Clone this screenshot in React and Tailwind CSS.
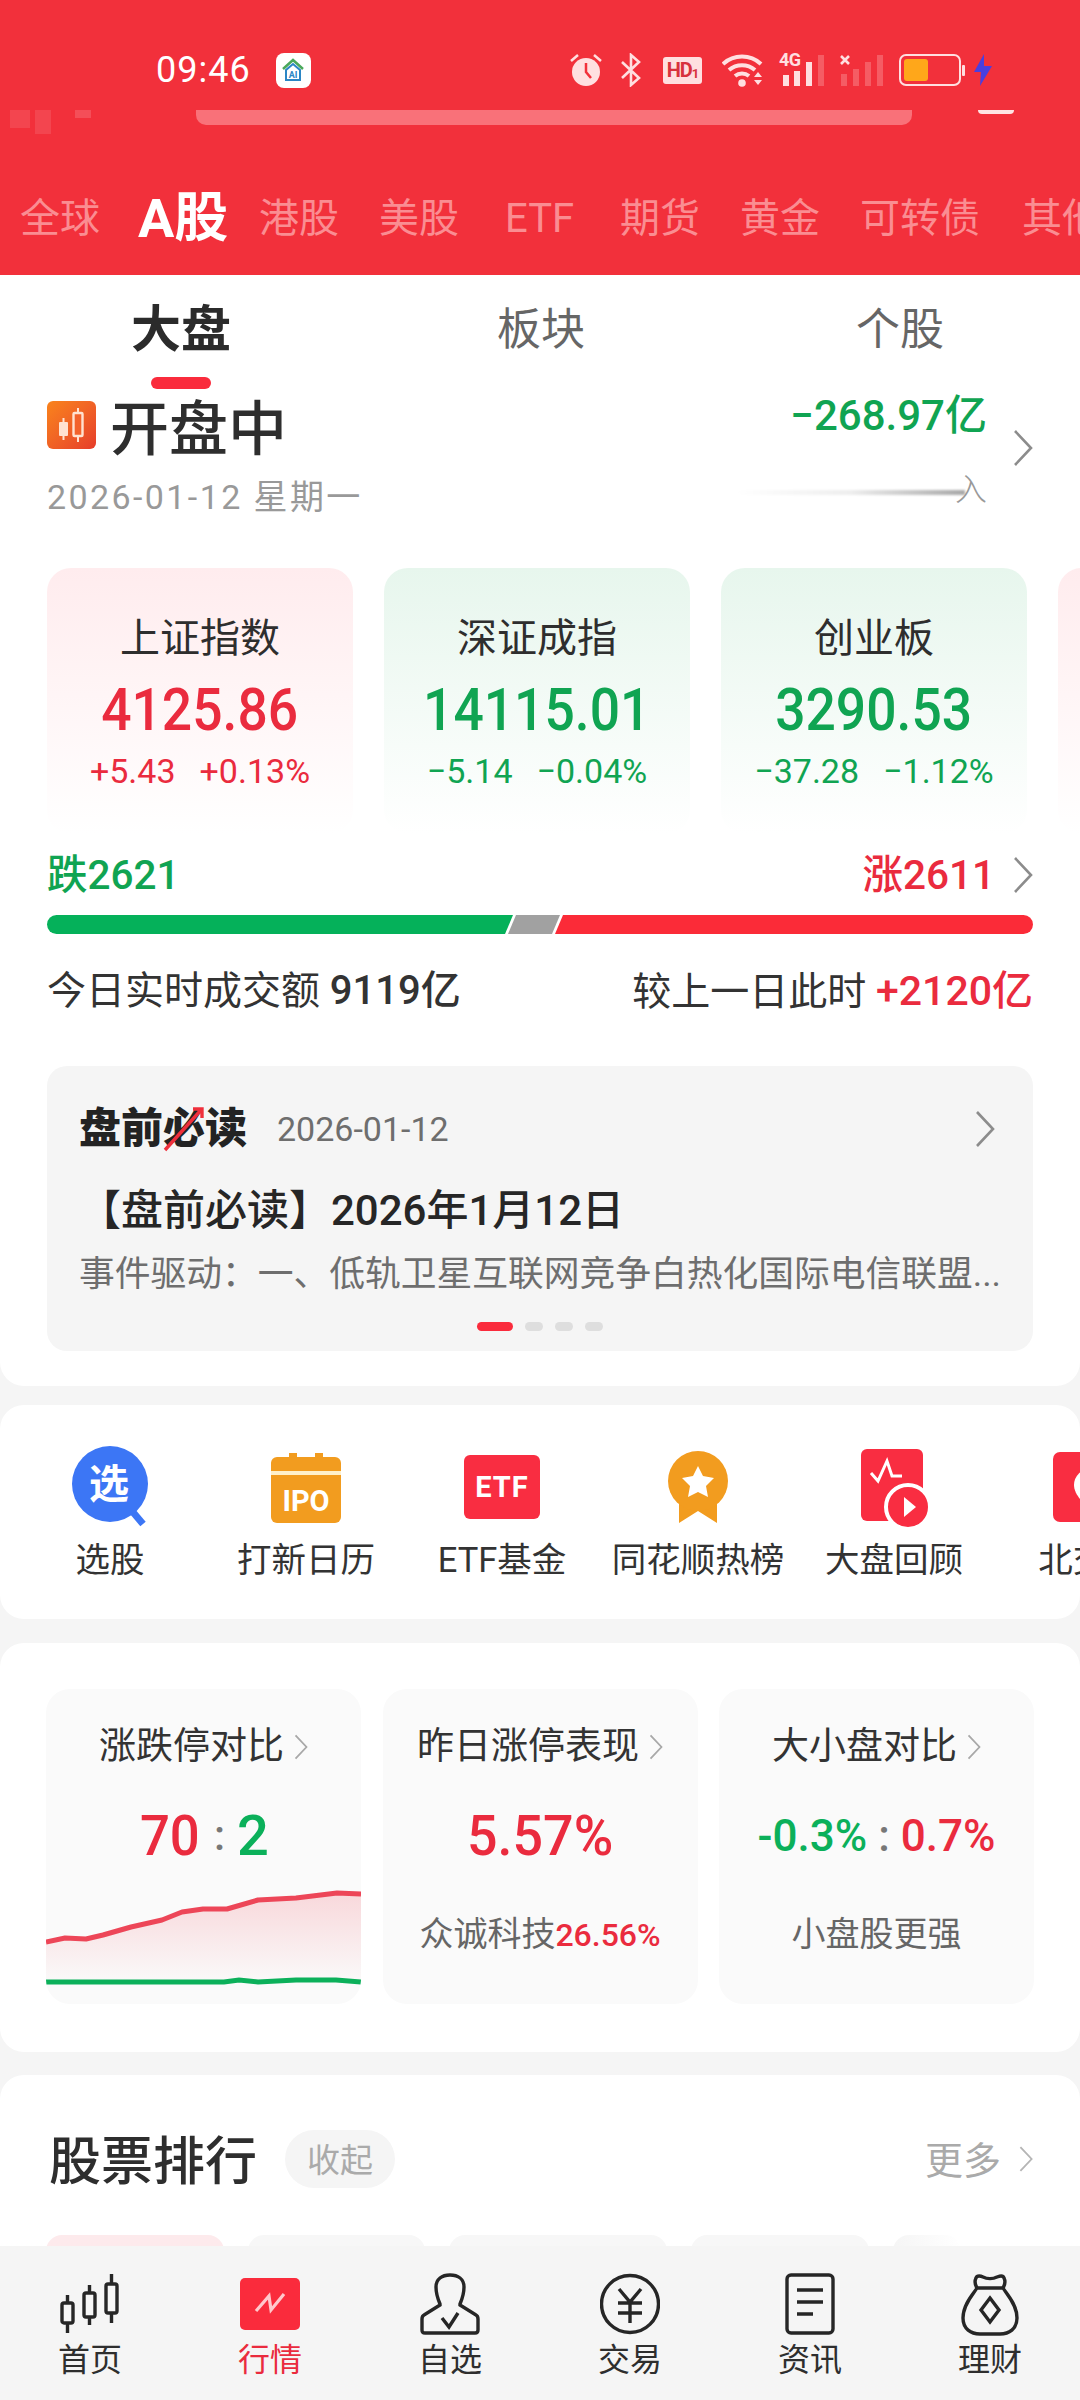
const RED = "text-[#ea2b3e]";
const GREEN = "text-[#10a452]";

function Chevron({ className = "", w = 20, h = 38, color = "#8c8c8c" }) {
  return (
    <svg width={w} height={h} viewBox="0 0 20 38" className={className}>
      <polyline points="2,2 18,19 2,36" fill="none" stroke={color} strokeWidth="2.6" />
    </svg>
  );
}

function StatusIcons() {
  const c = "#ffdfe0";
  return (
    <div className="flex items-center ml-auto mr-[87px] h-[40px]">
      {/* alarm */}
      <svg width="32" height="34" viewBox="0 0 32 34">
        <circle cx="16" cy="19" r="14" fill={c} />
        <path d="M16 10v9l5 6" fill="none" stroke="#f2303b" strokeWidth="2.5" />
        <path d="M1 8l7-6M31 8l-7-6" stroke={c} strokeWidth="2.5" />
      </svg>
      {/* bluetooth */}
      <svg width="22" height="34" viewBox="0 0 22 34" className="ml-[18px]">
        <path d="M2 9l17 16-8 7V2l8 7L2 25" fill="none" stroke={c} strokeWidth="2.6" />
      </svg>
      {/* HD */}
      <div className="ml-[21px] w-[39px] h-[27px] rounded-[3px] bg-[#ffdfe0] flex items-center justify-center text-[#d8323d] text-[20px] leading-none font-bold tracking-[-1px]">
        HD<span className="text-[13px] mt-[6px]">1</span>
      </div>
      {/* wifi */}
      <svg width="44" height="34" viewBox="0 0 44 34" className="ml-[20px]">
        <path d="M1 11a28 28 0 0 1 38 0M7 17a20 20 0 0 1 26 0M13 23a11 11 0 0 1 14 0" fill="none" stroke={c} strokeWidth="4" />
        <circle cx="20" cy="30" r="3.8" fill={c} />
        <path d="M32 24l4-5 4 5zM32 27l4 5 4-5z" fill={c} />
      </svg>
      {/* 4G */}
      <div className="relative ml-[13px] w-[46px] h-[34px]">
        <span className="absolute left-0 top-[-3px] text-[#ffdfe0] text-[18px] leading-[20px] font-bold tracking-[-0.5px]">4G</span>
        <svg width="46" height="34" viewBox="0 0 46 34" className="absolute inset-0">
          <rect x="4" y="22" width="6" height="11" fill={c} />
          <rect x="15" y="18" width="6" height="15" fill={c} />
          <rect x="27" y="9" width="6" height="24" fill={c} />
          <rect x="39" y="2" width="6" height="31" fill={c} opacity="0.25" />
        </svg>
      </div>
      {/* sim2 */}
      <svg width="44" height="34" viewBox="0 0 44 34" className="ml-[15px]">
        <path d="M1 3l8 8M9 3l-8 8" stroke={c} strokeWidth="2.6" />
        <rect x="1" y="21" width="6" height="12" fill={c} opacity="0.25" />
        <rect x="13" y="16" width="6" height="17" fill={c} opacity="0.25" />
        <rect x="25" y="9" width="6" height="24" fill={c} opacity="0.25" />
        <rect x="37" y="2" width="6" height="31" fill={c} opacity="0.25" />
      </svg>
      {/* battery */}
      <svg width="67" height="32" viewBox="0 0 67 32" className="ml-[15px]">
        <rect x="1" y="1" width="60" height="30" rx="6" fill="none" stroke={c} strokeWidth="2" />
        <rect x="5" y="5" width="24" height="22" rx="3" fill="#ffa71a" />
        <rect x="63" y="11" width="3" height="11" rx="1" fill={c} />
      </svg>
      {/* bolt */}
      <svg width="20" height="32" viewBox="0 0 20 32" className="ml-[7px]">
        <path d="M11 0L1 18h7l-1 14 12-20h-8z" fill="#4a3fe0" />
      </svg>
    </div>
  );
}

const marketTabs = [
  ["全球", "w-[81px] mr-[37px]"],
  ["A股", "w-[87px] mr-[34px] !text-white text-[54px] font-bold"],
  ["港股", "w-[82px] mr-[38px]"],
  ["美股", "w-[82px] mr-[44px]"],
  ["ETF", "w-[70px] mr-[45px]"],
  ["期货", "w-[81px] mr-[39px]"],
  ["黄金", "w-[82px] mr-[38px]"],
  ["可转债", "w-[122px] mr-[40px]"],
  ["其他", "w-[82px]"],
];

function Header() {
  return (
    <div className="h-[275px] bg-[#f2303b] shrink-0 overflow-hidden">
      <div className="h-[110px] pt-[30px] flex items-center">
        <span className="ml-[156px] text-white text-[36px] leading-[80px] tracking-[1px]">09:46</span>
        <div className="ml-[25px] w-[35px] h-[35px] rounded-[8px] bg-white flex items-center justify-center">
          <svg width="26" height="26" viewBox="0 0 26 26">
            <path d="M3 12L13 3l10 9" fill="none" stroke="#4aa85a" strokeWidth="2.5" />
            <path d="M6 13v10h14V13L13 7z" fill="none" stroke="#2b86c5" strokeWidth="2" />
            <text x="13" y="21" fontSize="9" fontWeight="700" fill="#2b86c5" textAnchor="middle">AI</text>
          </svg>
        </div>
        <StatusIcons />
      </div>
      <div className="relative h-[15px] flex">
        <svg width="100" height="32" viewBox="0 0 100 32" className="absolute left-[10px] top-0">
          <rect x="0" y="0" width="20" height="18" fill="#fff" opacity="0.1" />
          <rect x="25" y="0" width="16" height="24" fill="#fff" opacity="0.1" />
          <rect x="65" y="0" width="16" height="8" fill="#fff" opacity="0.15" />
        </svg>
        <div className="ml-[196px] w-[716px] h-[15px] rounded-b-[10px] bg-[#f97179]"></div>
        <div className="ml-[66px] w-[36px] h-[4px] rounded-b-full bg-[#ffe3e3]"></div>
      </div>
      <div className="flex items-center h-[102px] pl-[20px] mt-[43px] text-[40px] leading-[60px] text-[#fa8d92] whitespace-nowrap">
        {marketTabs.map(([t, c]) => (
          <span key={t} className={"shrink-0 " + c}>{t}</span>
        ))}
      </div>
    </div>
  );
}

function IndexCard({ name, value, a, b, up }) {
  return (
    <div
      className={
        "w-[306px] h-[266px] shrink-0 rounded-[24px] flex flex-col items-center bg-gradient-to-b to-white " +
        (up ? "from-[#ffecee]" : "from-[#e7f6ed]")
      }
    >
      <div className="mt-[45px] h-[52px] text-[40px] leading-[52px] text-[#2e2e2e]">{name}</div>
      <div className={"mt-[17px] h-[56px] text-[60px] leading-[56px] font-medium inline-block scale-x-[0.89] whitespace-nowrap " + (up ? RED : GREEN)}>{value}</div>
      <div className={"mt-[13px] h-[40px] flex gap-[24px] text-[34px] leading-[40px] whitespace-nowrap " + (up ? RED : GREEN)}>
        <span>{a}</span>
        <span>{b}</span>
      </div>
    </div>
  );
}

function Market() {
  return (
    <div className="bg-white rounded-b-[24px] shrink-0">
      <div className="flex h-[114px]">
        <div className="w-[362px] relative flex flex-col items-center">
          <span className="h-[104px] text-[50px] leading-[110px] font-bold text-[#2b2b2b]">大盘</span>
          <span className="w-[60px] h-[12px] rounded-full bg-[#fa2b3c] -mt-[2px]"></span>
        </div>
        <div className="w-[358px] text-center text-[44px] leading-[110px] text-[#666]">板块</div>
        <div className="w-[360px] text-center text-[44px] leading-[110px] text-[#666]">个股</div>
      </div>
      <div className="flex justify-between pl-[47px] pr-[47px] h-[179px]">
        <div>
          <div className="flex items-center h-[82px]">
            <div className="w-[49px] h-[48px] -mt-[10px] rounded-[6px] bg-gradient-to-br from-[#f9831b] to-[#e63b2a] flex items-center justify-center">
              <svg width="30" height="36" viewBox="0 0 30 36">
                <rect x="2" y="15" width="9" height="14" rx="1" fill="#ffe2d0" />
                <path d="M6.5 11v22M21 1v34" stroke="#ffe2d0" strokeWidth="2" />
                <rect x="16.5" y="6" width="9" height="23" rx="1" fill="#f3622b" stroke="#ffe2d0" strokeWidth="2.4" />
              </svg>
            </div>
            <span className="ml-[14px] text-[59px] leading-[82px] font-medium text-[#2e2e2e]">开盘中</span>
          </div>
          <div className="h-[52px] text-[34px] leading-[52px] text-[#999] tracking-[2.4px]">2026-01-12 星期一</div>
        </div>
        <div className="flex">
          <div className="flex flex-col items-end">
            <div className={"h-[52px] text-[42px] leading-[54px] font-medium whitespace-nowrap " + GREEN}>−268.97亿</div>
            <div className="relative w-[250px] h-[60px] mt-[24px]">
              <div className="absolute right-[22px] top-[25px] w-[228px] h-[5px] blur-[1px] bg-gradient-to-r from-white via-[#eeeeee] to-[#a8a8a8]"></div>
              <span className="absolute right-0 top-0 text-[32px] leading-[50px] text-[#999] font-light">入</span>
            </div>
          </div>
          <Chevron className="ml-[26px] mt-[40px]" />
        </div>
      </div>
      <div className="flex gap-[31px] pl-[47px] overflow-hidden">
        <IndexCard name="上证指数" value="4125.86" a="+5.43" b="+0.13%" up />
        <IndexCard name="深证成指" value="14115.01" a="−5.14" b="−0.04%" />
        <IndexCard name="创业板" value="3290.53" a="−37.28" b="−1.12%" />
        <div className="w-[306px] h-[266px] shrink-0 rounded-[24px] bg-gradient-to-b from-[#ffecee] to-white"></div>
      </div>
      <div className="mt-[17px] mx-[47px] h-[48px] flex items-center text-[40.5px] leading-[48px] font-medium">
        <span className={GREEN}>跌2621</span>
        <span className={"ml-auto " + RED}>涨2611</span>
        <Chevron className="ml-[18px]" />
      </div>
      <div className="mt-[16px] mx-[47px] h-[19px] flex rounded-full overflow-hidden">
        <div className="w-[466px] bg-[#05b15a] [clip-path:polygon(0_0,466px_0,458px_19px,0_19px)]"></div>
        <div className="w-[52px] -ml-[5px] bg-[#a1a1a1] [clip-path:polygon(8px_0,52px_0,44px_19px,0_19px)]"></div>
        <div className="w-[478px] -ml-[5px] bg-[#fb2b38] [clip-path:polygon(8px_0,478px_0,478px_19px,0_19px)]"></div>
      </div>
      <div className="mt-[33px] mx-[47px] h-[48px] flex items-center justify-between text-[39px] leading-[52px] text-[#333]">
        <div>今日实时成交额 <span className="font-medium text-[40px]">9119亿</span></div>
        <div>较上一日此时 <span className={"font-medium text-[41px] " + RED}>+2120亿</span></div>
      </div>
      <div className="mt-[51px] mx-[47px] h-[285px] rounded-[20px] bg-[#f5f5f5] pl-[32px] pr-[33px] flex flex-col">
        <div className="mt-[36px] h-[54px] flex items-center">
          <div className="relative w-[171px] h-[54px]">
            <span className="text-[42px] leading-[54px] font-black text-[#232323] whitespace-nowrap">盘前必读</span>
            <svg width="44" height="50" viewBox="0 0 44 50" className="absolute left-[84px] top-[2px]">
              <path d="M2 46L38 6M30 5h9v9" fill="none" stroke="#ef2f3b" strokeWidth="3.4" />
            </svg>
          </div>
          <span className="ml-[27px] text-[34px] leading-[54px] text-[#6e6e6e]">2026-01-12</span>
          <Chevron className="ml-auto mr-[5px]" />
        </div>
        <div className="mt-[30px] h-[50px] text-[42px] leading-[50px] font-medium text-[#262626] whitespace-nowrap">【盘前必读】2026年1月12日</div>
        <div className="mt-[14px] h-[48px] text-[35.75px] leading-[48px] text-[#6e6e6e] whitespace-nowrap">事件驱动：一、低轨卫星互联网竞争白热化国际电信联盟...</div>
        <div className="mt-[24px] flex items-center gap-[12px] ml-[398px]">
          <span className="w-[36px] h-[9px] rounded-full bg-[#fa2b3c]"></span>
          <span className="w-[18px] h-[9px] rounded-full bg-[#dedede]"></span>
          <span className="w-[18px] h-[9px] rounded-full bg-[#dedede]"></span>
          <span className="w-[18px] h-[9px] rounded-full bg-[#dedede]"></span>
        </div>
      </div>
      <div className="h-[35px]"></div>
    </div>
  );
}

function ToolIcon({ kind }) {
  if (kind === "xuan")
    return (
      <svg width="84" height="84" viewBox="0 0 84 84">
        <path d="M64 66l11 13" stroke="#3c76f5" strokeWidth="7" />
        <circle cx="42" cy="39" r="38" fill="#3c76f5" />
        <text x="41" y="53" fontSize="40" fontWeight="700" fill="#fff" textAnchor="middle">选</text>
      </svg>
    );
  if (kind === "ipo")
    return (
      <svg width="72" height="72" viewBox="0 0 72 72">
        <path d="M1 12a6 6 0 0 1 6-6h12V2h8v4h18V2h8v4h12a6 6 0 0 1 6 6v8H1z" fill="#f29c1f" />
        <path d="M1 24h70v42a6 6 0 0 1-6 6H7a6 6 0 0 1-6-6z" fill="#f29c1f" />
        <rect x="1" y="20" width="70" height="4" fill="#fff0c9" />
        <text x="36" y="60" fontSize="29" fontWeight="700" fill="#fff" textAnchor="middle">IPO</text>
      </svg>
    );
  if (kind === "etf")
    return (
      <svg width="78" height="66" viewBox="0 0 78 66">
        <rect x="1" y="1" width="76" height="64" rx="6" fill="#f92d41" />
        <text x="39" y="43" fontSize="29" fontWeight="700" fill="#fff" textAnchor="middle" letterSpacing="1">ETF</text>
      </svg>
    );
  if (kind === "medal")
    return (
      <svg width="62" height="74" viewBox="0 0 62 74">
        <path d="M12 40v33l19-12 19 12V40z" fill="#f29c1f" />
        <circle cx="31" cy="31" r="30" fill="#f29c1f" />
        <path d="M31 16l5 10 11 2-8 8 2 11-10-5-10 5 2-11-8-8 11-2z" fill="#fff" />
      </svg>
    );
  if (kind === "review")
    return (
      <svg width="68" height="80" viewBox="0 0 68 80">
        <rect x="1" y="2" width="62" height="72" rx="6" fill="#f92d41" />
        <path d="M11 26l7 8 9-20 5 15h10" fill="none" stroke="#fff" strokeWidth="3" />
        <circle cx="48" cy="60" r="22" fill="#f92d41" stroke="#fff" strokeWidth="4" />
        <path d="M44 50l12 10-12 10z" fill="#fff" />
      </svg>
    );
  return (
    <svg width="76" height="72" viewBox="0 0 76 72">
      <rect x="1" y="1" width="74" height="70" rx="7" fill="#f92d41" />
      <path d="M38 18a16 16 0 0 1 16 16c0 12-16 24-16 24S22 46 22 34a16 16 0 0 1 16-16z" fill="#fff" />
    </svg>
  );
}

const tools = [
  ["xuan", "选股"],
  ["ipo", "打新日历"],
  ["etf", "ETF基金"],
  ["medal", "同花顺热榜"],
  ["review", "大盘回顾"],
  ["bei", "北交所"],
];

function Tools() {
  return (
    <div className="mt-[19px] h-[214px] bg-white rounded-[24px] shrink-0 flex pl-[12px] overflow-hidden">
      {tools.map(([k, t]) => (
        <div key={k} className="w-[196px] shrink-0 flex flex-col items-center">
          <div className="h-[84px] mt-[40px] flex items-center justify-center">
            <ToolIcon kind={k} />
          </div>
          <div className="mt-[6px] h-[50px] text-[34.5px] leading-[50px] text-[#333] whitespace-nowrap">{t}</div>
        </div>
      ))}
    </div>
  );
}

function StatCard({ title, w = "w-[315px]", children }) {
  return (
    <div className={"relative h-[315px] shrink-0 rounded-[24px] bg-[#fafafa] overflow-hidden flex flex-col items-center " + w}>
      <div className="mt-[33px] h-[50px] flex items-center text-[37px] leading-[50px] text-[#333] whitespace-nowrap">
        {title}
        <Chevron w={14} h={26} color="#a8a8a8" className="ml-[10px]" />
      </div>
      {children}
    </div>
  );
}

function Stats() {
  return (
    <div className="mt-[24px] h-[409px] bg-white rounded-[24px] shrink-0 px-[46px] pt-[46px]">
      <div className="flex justify-between">
        <StatCard title="涨跌停对比">
          <div className="mt-[36px] h-[56px] text-[56px] leading-[56px] font-medium flex items-center gap-[12px]">
            <span className={"inline-block scale-x-[0.94] " + RED}>70</span>
            <span className="text-[#777] text-[42px]">:</span>
            <span className="text-[#0bb05a]">2</span>
          </div>
          <svg width="315" height="115" viewBox="0 0 315 115" className="absolute left-0 bottom-0">
            <defs>
              <linearGradient id="fill" x1="0" y1="0" x2="0" y2="1">
                <stop offset="0" stopColor="#f2505f" stopOpacity="0.2" />
                <stop offset="1" stopColor="#f2505f" stopOpacity="0" />
              </linearGradient>
            </defs>
            <path d="M0 53L19 49L40 50L57 46L85 38L116 31L136 23L157 20L181 20L212 11L250 9L291 4L315 5V95H0Z" fill="url(#fill)" />
            <path d="M0 53L19 49L40 50L57 46L85 38L116 31L136 23L157 20L181 20L212 11L250 9L291 4L315 5" fill="none" stroke="#ed4658" strokeWidth="5" strokeLinejoin="round" />
            <path d="M0 93H178L193 91L212 93L250 91L290 91L315 93" fill="none" stroke="#0bb05a" strokeWidth="5" />
          </svg>
        </StatCard>
        <StatCard title="昨日涨停表现">
          <div className={"mt-[36px] h-[56px] text-[56px] leading-[56px] font-medium inline-block scale-x-[0.96] " + RED}>5.57%</div>
          <div className="mt-[45px] h-[50px] text-[34px] leading-[50px] text-[#666] whitespace-nowrap">
            众诚科技<span className={"font-medium text-[32px] " + RED}>26.56%</span>
          </div>
        </StatCard>
        <StatCard title="大小盘对比">
          <div className="mt-[36px] h-[56px] text-[44px] leading-[56px] font-medium flex items-center gap-[11px] whitespace-nowrap">
            <span className="text-[#0bb05a]">-0.3%</span>
            <span className="text-[#777]">:</span>
            <span className={RED}>0.7%</span>
          </div>
          <div className="mt-[45px] h-[50px] text-[34px] leading-[50px] text-[#666]">小盘股更强</div>
        </StatCard>
      </div>
    </div>
  );
}

function Rank() {
  return (
    <div className="mt-[23px] flex-1 min-h-0 overflow-hidden bg-white rounded-t-[24px]">
      <div className="mt-[55px] ml-[49px] mr-[47px] h-[58px] flex items-center">
        <span className="text-[52px] leading-[66px] h-[58px] font-medium text-[#2e2e2e] whitespace-nowrap">股票排行</span>
        <span className="ml-[28px] w-[110px] h-[58px] rounded-full bg-[#f5f5f5] text-center text-[33px] leading-[62px] text-[#aaa]">收起</span>
        <span className="ml-auto h-[58px] text-[38px] leading-[62px] text-[#aaa]">更多</span>
        <Chevron w={14} h={30} color="#b5b5b5" className="ml-[18px]" />
      </div>
      <div className="mt-[47px] flex gap-[24px] pl-[46px]">
        <div className="w-[178px] h-[30px] rounded-t-[16px] bg-[#fdeaec]"></div>
        <div className="w-[177px] h-[30px] rounded-t-[16px] bg-[#f7f7f7]"></div>
        <div className="w-[218px] h-[30px] rounded-t-[16px] bg-[#f7f7f7]"></div>
        <div className="w-[178px] h-[30px] rounded-t-[16px] bg-[#f7f7f7]"></div>
        <div className="w-[68px] h-[30px] rounded-t-[16px] bg-gradient-to-r from-[#f5f5f5] to-white"></div>
      </div>
    </div>
  );
}

function NavIcon({ kind }) {
  const s = { fill: "none", stroke: "#262626", strokeWidth: 3.4 };
  if (kind === 0)
    return (
      <svg width="60" height="62" viewBox="0 0 60 62">
        <rect x="2" y="30" width="11" height="20" rx="2" {...s} />
        <path d="M7.5 22v8M7.5 50v10" {...s} />
        <rect x="24" y="20" width="11" height="24" rx="2" {...s} />
        <path d="M29.5 12v8M29.5 44v8" {...s} />
        <rect x="46" y="11" width="11" height="29" rx="2" {...s} />
        <path d="M51.5 1v10M51.5 40v10" {...s} />
      </svg>
    );
  if (kind === 1)
    return (
      <svg width="60" height="52" viewBox="0 0 60 52">
        <rect width="60" height="52" rx="5" fill="#fa2b3c" />
        <path d="M16 33l13-15 2 14 13-16" fill="none" stroke="#ffc8cc" strokeWidth="3.2" />
      </svg>
    );
  if (kind === 2)
    return (
      <svg width="60" height="62" viewBox="0 0 60 62">
        <path d="M20 31C17 24 16 18 16 14C16 6 22 2 30 2C38 2 44 6 44 14C44 18 43 24 40 31L40 32L56 42C58 43 58 44 58 46V57C58 59 57 60 55 60H5C3 60 2 59 2 57V46C2 44 2 43 4 42L20 32Z" {...s} />
        <path d="M22 45l7 9 9-14" {...s} />
      </svg>
    );
  if (kind === 3)
    return (
      <svg width="60" height="62" viewBox="0 0 60 62">
        <circle cx="30" cy="31" r="28.5" {...s} />
        <path d="M19 16l11 13 11-13M18 30h24M18 40h24M30 29v21" {...s} />
      </svg>
    );
  if (kind === 4)
    return (
      <svg width="50" height="62" viewBox="0 0 50 62">
        <rect x="2" y="2" width="46" height="58" rx="4" {...s} />
        <path d="M12 17h26M12 29h26M12 41h16" {...s} />
      </svg>
    );
  return (
    <svg width="58" height="64" viewBox="0 0 58 64">
      <path d="M16 16c-3-5-2-8-1-10 1-3 5-2 7-1 4 2 10 2 14 0 3-1 6-2 7 1 1 2 2 5-1 10" {...s} />
      <path d="M16 16h26c3 5 14 16 14 30 0 11-8 16-17 16H19C10 62 2 57 2 46c0-14 11-25 14-30z" {...s} />
      <path d="M29 26l9 12-9 12-9-12z" {...s} />
    </svg>
  );
}

const navs = ["首页", "行情", "自选", "交易", "资讯", "理财"];

function Nav() {
  return (
    <div className="h-[154px] bg-[#f5f5f5] shrink-0 grid grid-cols-6">
      {navs.map((n, i) => (
        <div key={n} className="flex flex-col items-center">
          <div className="h-[66px] mt-[25px] flex items-center justify-center">
            <NavIcon kind={i} />
          </div>
          <div className={"mt-[1px] h-[44px] text-[32px] leading-[44px] " + (i === 1 ? RED : "text-[#2e2e2e]")}>{n}</div>
        </div>
      ))}
    </div>
  );
}

export default function App() {
  return (
    <div className="w-[1080px] h-[2400px] overflow-hidden flex flex-col bg-[#f5f5f5] font-['Roboto','Noto_Sans_CJK_SC',sans-serif]">
      <Header />
      <Market />
      <Tools />
      <Stats />
      <Rank />
      <Nav />
    </div>
  );
}
